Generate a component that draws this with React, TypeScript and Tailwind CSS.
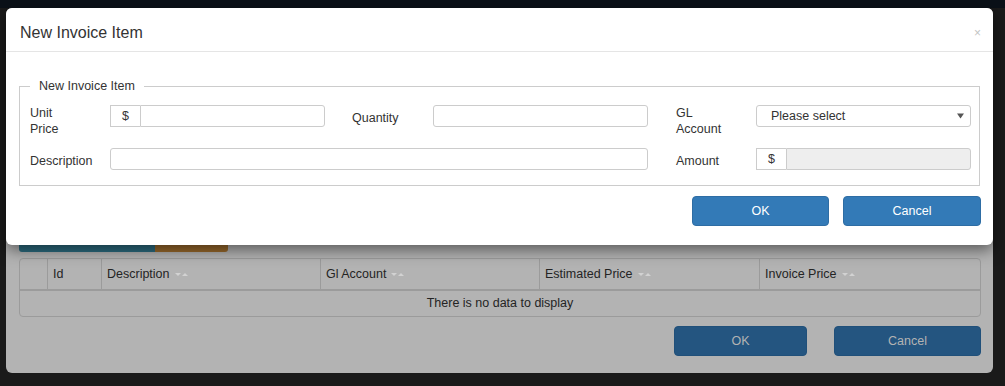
import React from "react";

const SortIcon = () => (
  <svg width="14" height="5" viewBox="0 0 14 5" className="mt-[1px] ml-[5px] inline-block">
    <path d="M0 1h6L3 4z" fill="#d2d2d2" />
    <path d="M7 4h6L10 1z" fill="#d2d2d2" />
  </svg>
);

const columns = ["", "Id", "Description", "Gl Account", "Estimated Price", "Invoice Price"];

const DollarGroup: React.FC<{ disabled?: boolean }> = ({ disabled }) => (
  <div className="flex h-[22px] w-[215px]">
    <div className="flex w-[30px] items-center justify-center border border-r-0 border-[#ccc] bg-white text-[#333]">
      $
    </div>
    <div
      className={`flex-1 rounded-r-[3px] border border-[#ccc] ${disabled ? "bg-[#eee]" : "bg-white"}`}
    />
  </div>
);

export default function App() {
  return (
    <div className="relative h-[386px] w-[1005px] overflow-hidden bg-[#1a1a1a] font-['Liberation_Sans',Arial,sans-serif] text-[12.5px]">
      <div className="h-[8px] bg-[#0b1118]" />

      {/* underlying modal, dimmed by the backdrop */}
      <div className="ml-[6px] h-[365px] w-[987px] rounded-[6px] bg-[#b3b3b3] pt-[212px] pr-[12px] pl-[13px] text-[#242424]">
        <div className="flex">
          <div className="h-[32px] w-[136px] rounded-l-[3px] bg-[#2c6c80]" />
          <div className="h-[32px] w-[73px] rounded-r-[3px] bg-[#9a6a2c]" />
        </div>

        <div className="mt-[6px] w-[962px] rounded-[4px] border border-[#9b9b9b]">
          <div className="grid h-[32px] grid-cols-[27px_54px_219px_219px_220px_1fr] border-b-2 border-[#9b9b9b]">
            {columns.map((c, i) => (
              <div
                key={i}
                className={`flex items-center px-[5px] ${i > 0 ? "border-l border-[#9b9b9b]" : ""}`}
              >
                {c}
                {i > 1 && <SortIcon />}
              </div>
            ))}
          </div>
          <div className="flex h-[25px] items-center justify-center">There is no data to display</div>
        </div>

        <div className="mt-[9px] flex justify-end gap-[27px]">
          <button className="h-[30px] w-[133px] rounded-[4px] border border-[#20507a] bg-[#245580] text-[#b3b3b3]">
            OK
          </button>
          <button className="h-[30px] w-[147px] rounded-[4px] border border-[#20507a] bg-[#245580] text-[#b3b3b3]">
            Cancel
          </button>
        </div>
      </div>

      {/* top modal */}
      <div className="absolute top-[8px] left-[6px] h-[237px] w-[987px] rounded-[6px] bg-white text-[#333] shadow-[0_5px_15px_rgba(0,0,0,0.5)]">
        <div className="flex h-[44px] items-center justify-between border-b border-[#e5e5e5] pt-[6px] pr-[12px] pl-[14px]">
          <h4 className="text-[16px]">New Invoice Item</h4>
          <span className="text-[12px] leading-none text-[#c4c4c4]">×</span>
        </div>

        <div className="px-[13px] pt-[27px]">
          <fieldset className="border border-[#ccc] pt-[11px] pr-[8px] pb-[15px] pl-[10px]">
            <legend className="px-[9px] leading-[15px]">New Invoice Item</legend>

            <div className="flex items-start">
              <label className="w-[80px] leading-[16px]">
                Unit
                <br />
                Price
              </label>
              <DollarGroup />
              <label className="ml-[27px] w-[81px] pt-[5px] leading-[16px]">Quantity</label>
              <div className="h-[22px] w-[215px] rounded-[3px] border border-[#ccc]" />
              <label className="ml-[28px] w-[80px] leading-[16px]">
                GL
                <br />
                Account
              </label>
              <div className="flex h-[22px] w-[215px] items-center justify-between rounded-[3px] border border-[#ccc] pr-[6px] pl-[14px]">
                <span>Please select</span>
                <svg width="7" height="6" viewBox="0 0 7 6">
                  <path d="M0 0.5h7L3.5 5.5z" fill="#555" />
                </svg>
              </div>
            </div>

            <div className="mt-[11px] flex items-start">
              <label className="w-[80px] pt-[5px] leading-[16px]">Description</label>
              <div className="h-[22px] w-[538px] rounded-[3px] border border-[#ccc]" />
              <label className="ml-[28px] w-[80px] pt-[5px] leading-[16px]">Amount</label>
              <DollarGroup disabled />
            </div>
          </fieldset>
        </div>

        <div className="mt-[10px] flex justify-end gap-[14px] pr-[12px]">
          <button className="h-[30px] w-[137px] rounded-[4px] border border-[#2e6da4] bg-[#337ab7] text-white">
            OK
          </button>
          <button className="h-[30px] w-[138px] rounded-[4px] border border-[#2e6da4] bg-[#337ab7] text-white">
            Cancel
          </button>
        </div>
      </div>
    </div>
  );
}
